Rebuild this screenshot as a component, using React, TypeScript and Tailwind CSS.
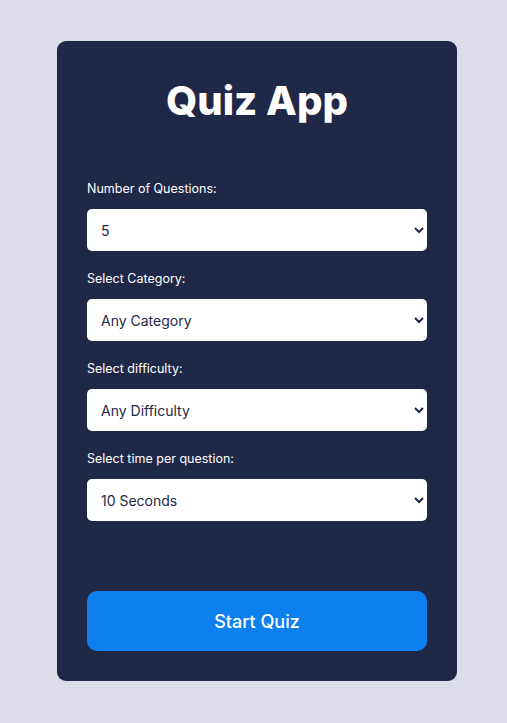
import { useState } from "react";

const fieldClass =
  "w-full h-[42px] rounded-[5px] bg-white pl-[10px] pr-2 text-[14px] text-[#1f2847] outline-none";

type FieldProps = {
  label: string;
  value: string;
  options: string[];
  onChange: (v: string) => void;
};

const Field: React.FC<FieldProps> = ({ label, value, options, onChange }) => {
  return (
    <div className="flex flex-col">
      <label className="text-[12.5px] leading-[20px] text-white mb-[10px]">{label}</label>
      <select value={value} onChange={(e) => onChange(e.target.value)} className={fieldClass}>
        {options.map((o) => (
          <option key={o} value={o}>
            {o}
          </option>
        ))}
      </select>
    </div>
  );
};

export default function App() {
  const [amount, setAmount] = useState("5");
  const [category, setCategory] = useState("Any Category");
  const [difficulty, setDifficulty] = useState("Any Difficulty");
  const [time, setTime] = useState("10 Seconds");

  return (
    <div
      className="min-h-[723px] w-full bg-[#dcdde9] flex justify-center pt-[41px] pl-[7px]"
      style={{ fontFamily: "Inter, 'Noto Sans', sans-serif" }}
    >
      <div className="w-[400px] h-[640px] bg-[#1f2847] rounded-[9px] px-[30px] pt-[30px] pb-[30px] flex flex-col">
        <h1 className="text-[40px] leading-[60px] font-extrabold text-white text-center">Quiz App</h1>

        <div className="mt-[48px] flex flex-col gap-[18px]">
          <Field
            label="Number of Questions:"
            value={amount}
            onChange={setAmount}
            options={["5", "10", "15", "20"]}
          />
          <Field
            label="Select Category:"
            value={category}
            onChange={setCategory}
            options={["Any Category", "General Knowledge", "Science", "History"]}
          />
          <Field
            label="Select difficulty:"
            value={difficulty}
            onChange={setDifficulty}
            options={["Any Difficulty", "Easy", "Medium", "Hard"]}
          />
          <Field
            label="Select time per question:"
            value={time}
            onChange={setTime}
            options={["10 Seconds", "15 Seconds", "30 Seconds", "60 Seconds"]}
          />
        </div>

        <button className="mt-auto h-[60px] w-full rounded-[10px] bg-[#0d80ef] text-white text-[18px] font-medium">
          Start Quiz
        </button>
      </div>
    </div>
  );
}
